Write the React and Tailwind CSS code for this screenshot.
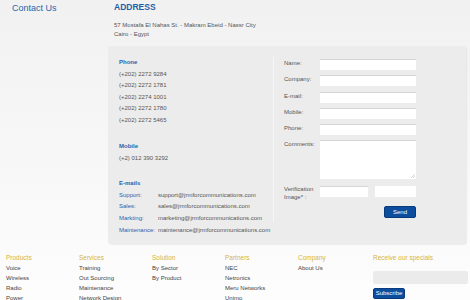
export default function App() {
  const phones = ["(+202) 2272 9284", "(+202) 2272 1781", "(+202) 2274 1001", "(+202) 2272 1780", "(+202) 2272 5465"];
  const emails = [
    ["Support:", "support@jrmforcommunications.com"],
    ["Sales:", "sales@jrmforcommunications.com"],
    ["Markting:", "marketing@jrmforcommunications.com"],
    ["Maintenance:", "maintenance@jrmforcommunications.com"],
  ];
  const fields = ["Name:", "Company:", "E-mail:", "Mobile:", "Phone:"];
  const footer = [
    ["Products", ["Voice", "Wireless", "Radio", "Power"]],
    ["Services", ["Training", "Out Sourcing", "Maintenance", "Network Design"]],
    ["Solution", ["By Sector", "By Product"]],
    ["Partners", ["NEC", "Netronics", "Meru Networks", "Unimo"]],
    ["Company", ["About Us"]],
  ];
  const input = "h-[11px] w-[96px] bg-white border-t border-t-[#d6d6d6]";
  return (
    <div className="w-[470px] h-[300px] overflow-hidden bg-gradient-to-b from-[#f1f1f1] to-[#fdfdfd] font-['Liberation_Sans',Arial,sans-serif] text-[6px] text-[#555]">
      <div className="flex">
        <div className="w-[108px] pl-[12px] pt-[2px] text-[9px] leading-[12px] text-[#2466ad]">Contact Us</div>
        <div className="flex flex-col">
          <div className="pl-[6px] pt-[2px] text-[8.5px] leading-[10px] font-bold text-[#1f5fa8]">ADDRESS</div>
          <div className="pl-[6px] pt-[9px] leading-[9px] text-[#555]">
            <div>57 Mostafa El Nahas St. - Makram Ebeid - Nassr City</div>
            <div>Cairo - Egypt</div>
          </div>
          <div className="mt-[7px] w-[358px] h-[198px] rounded-[3px] bg-[#ececec] shadow-[1px_1px_1px_rgba(0,0,0,0.06)] flex">
            <div className="w-[165px] pl-[11px] pt-[11px]">
              <div className="h-[11.5px] leading-[11.5px] font-bold text-[#2a63ad]">Phone</div>
              {phones.map((p) => (
                <div key={p} className="h-[11.5px] leading-[11.5px]">{p}</div>
              ))}
              <div className="h-[15px]" />
              <div className="h-[11.5px] leading-[11.5px] font-bold text-[#2a63ad]">Mobile</div>
              <div className="h-[11.5px] leading-[11.5px]">(+2) 012 390 3292</div>
              <div className="h-[14px]" />
              <div className="h-[11.7px] leading-[11.7px] font-bold text-[#2a63ad]">E-mails</div>
              {emails.map(([l, e]) => (
                <div key={l} className="flex h-[11.7px] leading-[11.7px]">
                  <span className="w-[39px] text-[#2a63ad]">{l}</span>
                  <span className="whitespace-nowrap">{e}</span>
                </div>
              ))}
            </div>
            <div className="mt-[11px] h-[165px] w-[1px] bg-[#dcdcdc] border-r border-r-[#f6f6f6]" />
            <div className="pl-[10px] pt-[13px] flex flex-col gap-[5.3px]">
              {fields.map((f) => (
                <div key={f} className="flex">
                  <span className="w-[36px] leading-[8px]">{f}</span>
                  <div className={input} />
                </div>
              ))}
              <div className="flex">
                <span className="w-[36px] leading-[8px]">Comments:</span>
                <div className="h-[39px] w-[96px] bg-white border-t border-t-[#d6d6d6] relative">
                  <svg className="absolute right-[1px] bottom-[1px]" width="4" height="4" viewBox="0 0 4 4">
                    <path d="M4 0L0 4M4 2L2 4" stroke="#aaa" strokeWidth="0.5" />
                  </svg>
                </div>
              </div>
              <div className="flex mt-[1px]">
                <span className="w-[36px] leading-[8px] -mt-[1px]">Verification<br />Image* :</span>
                <div className="h-[11px] w-[48px] bg-white border-t border-t-[#d6d6d6]" />
                <div className="ml-[7px] h-[11px] w-[41px] bg-white" />
              </div>
              <div className="flex justify-end">
                <button className="w-[32px] h-[12px] rounded-[2px] bg-[#0c4d9e] border border-[#073b7c] text-white text-[6px] leading-[10px]">Send</button>
              </div>
            </div>
          </div>
        </div>
      </div>
      <div className="flex pl-[6px] pt-[9px]">
        {footer.map(([h, items]) => (
          <div key={h} className="w-[73px]">
            <div className="h-[10px] leading-[10px] text-[6.5px] text-[#d8b53c]">{h}</div>
            {items.map((i) => (
              <div key={i} className="h-[10px] leading-[10px] text-[#444]">{i}</div>
            ))}
          </div>
        ))}
        <div className="w-[96px] ml-[2px]">
          <div className="h-[10px] leading-[10px] text-[6.5px] text-[#d8b53c] whitespace-nowrap">Receive our specials</div>
          <div className="mt-[8px] h-[13px] w-[95px] rounded-[2px] bg-[#ebebeb]" />
          <button className="mt-[4px] w-[32px] h-[11px] rounded-[2px] bg-[#0c4d9e] border border-[#073b7c] text-white text-[6px] leading-[9px]">Subscribe</button>
        </div>
      </div>
    </div>
  );
}
